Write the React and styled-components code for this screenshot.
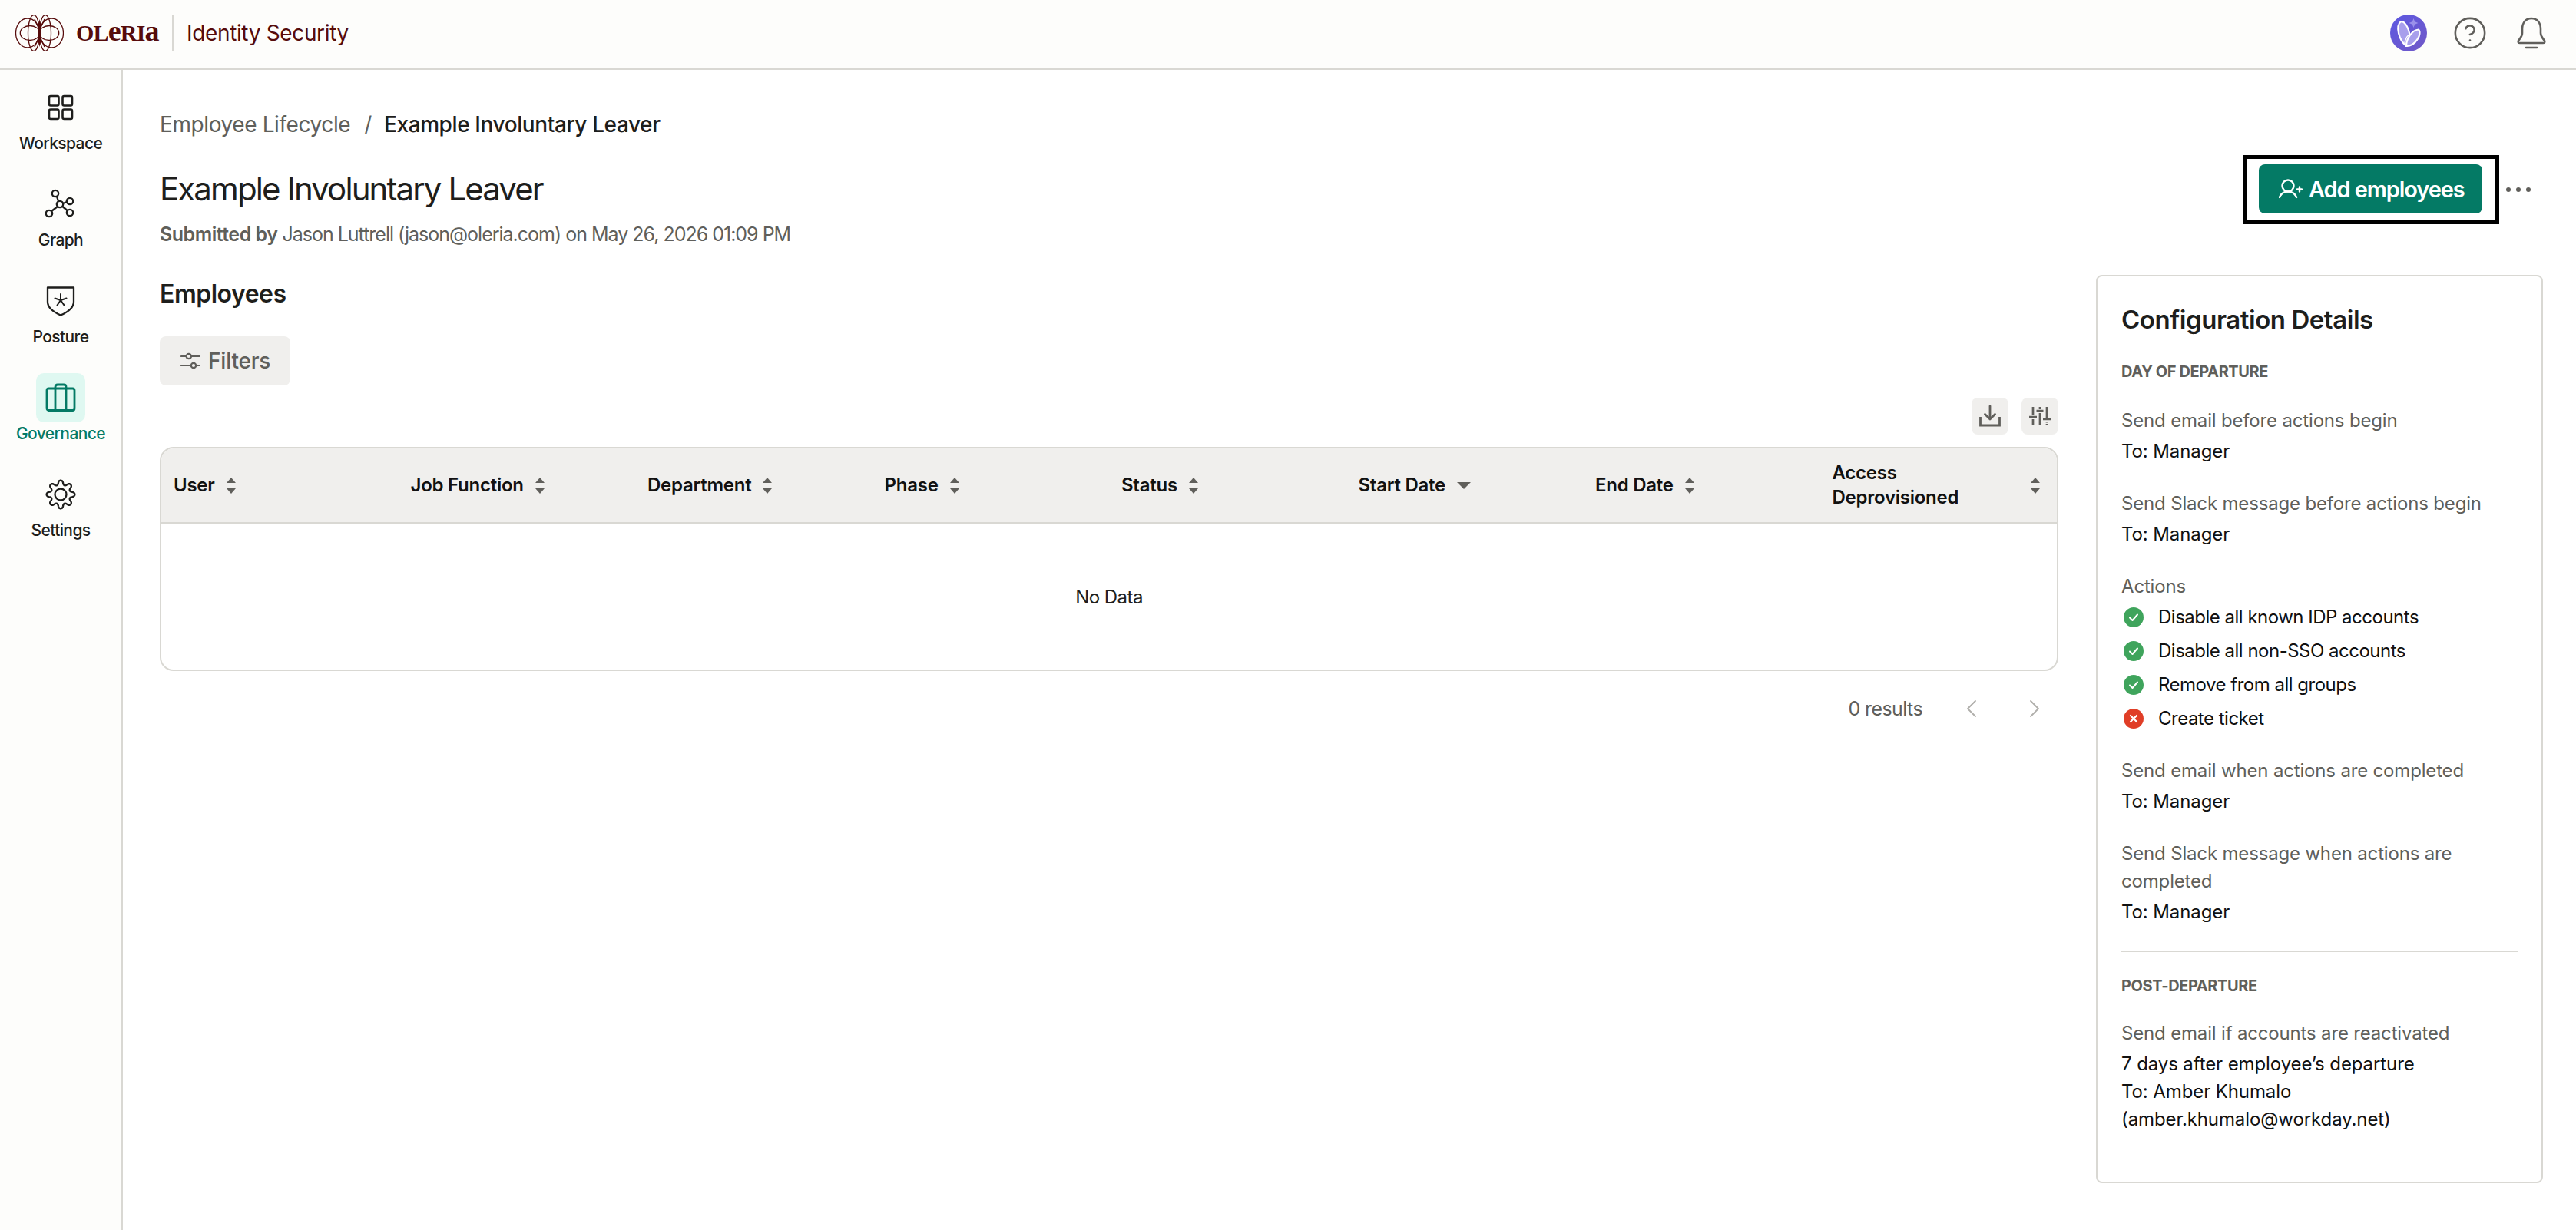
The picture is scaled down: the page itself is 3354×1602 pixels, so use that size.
import React from "react";
import styled, { createGlobalStyle } from "styled-components";
import { CircleHelp, ChevronLeft, ChevronRight } from "lucide-react";

const INK = "#1e1e1c";
const MUTED = "#605f5b";
const LINE = "#d9d8d3";
const SOFT = "#f0efed";
const TEAL = "#047a65";
const MAROON = "#560b0b";

const Global = createGlobalStyle`
  html, body { margin: 0; padding: 0; background: #fff; }
  body { font-family: Inter, "Noto Sans", "Liberation Sans", sans-serif; color: ${INK}; }
  * { box-sizing: border-box; }
`;

const Page = styled.div`
  width: 3354px;
  height: 1602px;
  overflow: hidden;
  display: flex;
  flex-direction: column;
`;

const TopBar = styled.header`
  height: 91px;
  flex: none;
  display: flex;
  align-items: center;
  justify-content: space-between;
  padding: 0 34px 3px 20px;
  background: #fdfdfb;
  border-bottom: 2px solid ${LINE};
`;

const Brand = styled.div`
  display: flex;
  align-items: center;
`;

const Wordmark = styled.span`
  margin-left: 16px;
  width: 105px;
  font-family: "Liberation Serif", serif;
  font-size: 30px;
  font-weight: 700;
  line-height: 48px;
  letter-spacing: -0.8px;
  color: ${MAROON};
  white-space: nowrap;
`;

const WordLower = styled.span`
  font-size: 38px;
  line-height: 1;
`;

const BrandRule = styled.span`
  width: 2px;
  height: 48px;
  margin: 0 17px 0 20px;
  background: ${LINE};
`;

const Product = styled.span`
  font-size: 28px;
  line-height: 48px;
  letter-spacing: -0.35px;
  color: ${MAROON};
`;

const TopIcons = styled.div`
  display: flex;
  align-items: center;
  gap: 32px;
`;

const TopIcon = styled.span`
  display: flex;
  align-items: center;
  justify-content: center;
  width: 48px;
  height: 48px;
  color: ${MUTED};
`;

const Body = styled.div`
  flex: 1;
  display: flex;
  min-height: 0;
`;

const Sidebar = styled.nav`
  width: 160px;
  flex: none;
  padding-top: 17px;
  display: flex;
  flex-direction: column;
  align-items: center;
  gap: 32px;
  background: #fdfdfb;
  border-right: 2px solid ${LINE};
`;

const NavItem = styled.a`
  display: flex;
  flex-direction: column;
  align-items: center;
  width: 130px;
  color: ${(p) => (p.$active ? TEAL : INK)};
`;

const NavIcon = styled.span`
  display: flex;
  align-items: center;
  justify-content: center;
  width: 64px;
  height: 64px;
  border-radius: 10px;
  background: ${(p) => (p.$active ? "#dff8f1" : "transparent")};
`;

const NavLabel = styled.span`
  font-size: 21px;
  line-height: 30px;
  font-weight: 500;
  letter-spacing: -0.6px;
`;

const Main = styled.main`
  flex: 1;
  min-width: 0;
  padding: 53px 43px 0 48px;
  background: #fff;
`;

const Crumbs = styled.div`
  display: flex;
  align-items: center;
  height: 36px;
  font-size: 28px;
  letter-spacing: -0.4px;
  color: ${MUTED};
`;

const CrumbSep = styled.span`
  margin: 0 16px 0 18px;
`;

const CrumbNow = styled.span`
  color: ${INK};
  font-weight: 500;
`;

const PageHead = styled.div`
  margin-top: 22px;
  display: flex;
  justify-content: space-between;
  align-items: flex-start;
`;

const TitleBlock = styled.div`
  padding-top: 16px;
`;

const Title = styled.h1`
  margin: 0;
  font-size: 42px;
  line-height: 56px;
  font-weight: 400;
  letter-spacing: -1.9px;
`;

const Submitted = styled.p`
  margin: 13px 0 0;
  font-size: 25px;
  line-height: 36px;
  letter-spacing: -1px;
  color: ${MUTED};
  b { font-weight: 600; letter-spacing: -0.5px; }
`;

const HeadActions = styled.div`
  display: flex;
  align-items: center;
  margin-right: 7px;
`;

const Marked = styled.div`
  border: 5px solid #000;
  padding: 7px 17px 9px 15px;
`;

const PrimaryButton = styled.button`
  display: flex;
  align-items: center;
  gap: 8px;
  height: 64px;
  width: 291px;
  padding: 0 0 0 26px;
  border: 0;
  border-radius: 8px;
  background: ${TEAL};
  color: #fff;
  font: 600 29px/1 Inter, sans-serif;
  letter-spacing: -1.1px;
`;

const MoreDots = styled.span`
  display: flex;
  align-items: center;
  justify-content: center;
  gap: 7px;
  width: 50px;
  height: 40px;
  span {
    width: 6px;
    height: 6px;
    border-radius: 50%;
    background: ${MUTED};
  }
`;

const Columns = styled.div`
  margin-top: 35px;
  display: flex;
  gap: 49px;
  align-items: flex-start;
`;

const LeftColumn = styled.section`
  width: 2472px;
  flex: none;
`;

const SectionTitle = styled.h2`
  margin: 1px 0 0;
  font-size: 32px;
  line-height: 48px;
  font-weight: 600;
  letter-spacing: -0.5px;
`;

const FilterButton = styled.button`
  margin-top: 31px;
  display: flex;
  align-items: center;
  gap: 10px;
  width: 170px;
  height: 64px;
  padding: 0 0 0 27px;
  border: 0;
  border-radius: 8px;
  background: ${SOFT};
  color: ${MUTED};
  font: 500 28px/1 Inter, sans-serif;
  letter-spacing: -0.2px;
`;

const ToolRow = styled.div`
  margin-top: 16px;
  display: flex;
  justify-content: flex-end;
  gap: 17px;
`;

const ToolButton = styled.span`
  display: flex;
  align-items: center;
  justify-content: center;
  width: 48px;
  height: 48px;
  border-radius: 8px;
  background: ${SOFT};
`;

const TableBox = styled.div`
  margin-top: 16px;
  border: 2px solid ${LINE};
  border-radius: 18px;
  overflow: hidden;
`;

const HeadRow = styled.div`
  display: grid;
  grid-template-columns: repeat(8, 1fr);
  height: 98px;
  background: ${SOFT};
  border-bottom: 2px solid ${LINE};
`;

const HeadCell = styled.div`
  display: flex;
  align-items: center;
  justify-content: ${(p) => (p.$spread ? "space-between" : "flex-start")};
  gap: 15px;
  padding: 0 22px 0 16px;
  font-size: 24px;
  line-height: 32px;
  font-weight: 600;
  letter-spacing: -0.25px;
  color: #111;
`;

const EmptyBody = styled.div`
  height: 190px;
  display: flex;
  align-items: center;
  justify-content: center;
  font-size: 24px;
  letter-spacing: -0.55px;
`;

const Pager = styled.div`
  margin-top: 31px;
  display: flex;
  align-items: center;
  justify-content: flex-end;
  padding-right: 11px;
  height: 36px;
  font-size: 25px;
  letter-spacing: -0.6px;
  color: ${MUTED};
`;

const PagerArrow = styled.span`
  display: flex;
  align-items: center;
  justify-content: center;
  width: 40px;
  margin-left: ${(p) => p.$gap}px;
  color: #b0afab;
`;

const Panel = styled.aside`
  width: 582px;
  height: 1183px;
  flex: none;
  padding: 32px 31px;
  border: 2px solid ${LINE};
  border-radius: 8px;
`;

const PanelTitle = styled.h3`
  margin: 0;
  font-size: 33px;
  line-height: 48px;
  font-weight: 600;
  letter-spacing: -0.45px;
`;

const GroupLabel = styled.div`
  margin-top: ${(p) => p.$top}px;
  font-size: 20px;
  line-height: 28px;
  font-weight: 700;
  letter-spacing: -0.4px;
  color: ${MUTED};
`;

const Block = styled.div`
  margin-top: ${(p) => p.$top || 32}px;
`;

const BlockLabel = styled.div`
  font-size: 24px;
  line-height: 36px;
  letter-spacing: -0.17px;
  color: ${MUTED};
`;

const BlockValue = styled.div`
  margin-top: 4px;
  font-size: 24px;
  line-height: 36px;
  letter-spacing: -0.1px;
  color: #111;
`;

const ActionList = styled.ul`
  list-style: none;
  margin: 4px 0 0;
  padding: 0;
  display: flex;
  flex-direction: column;
  gap: 8px;
`;

const ActionRow = styled.li`
  display: flex;
  align-items: center;
  gap: 19px;
  padding-left: 3px;
  font-size: 24px;
  line-height: 36px;
  letter-spacing: -0.5px;
  color: #111;
`;

const Rule = styled.hr`
  margin: 32px 0 0;
  border: 0;
  height: 2px;
  background: ${LINE};
`;

const LogoMark = () => (
  <svg width="63" height="48" viewBox="0 0 63 48" fill="none" stroke={MAROON} strokeWidth="1.3">
    <ellipse cx="16" cy="24" rx="15.5" ry="19" />
    <ellipse cx="47" cy="24" rx="15.5" ry="19" />
    <ellipse cx="19" cy="24" rx="12.7" ry="9.5" />
    <ellipse cx="44" cy="24" rx="12.7" ry="9.5" />
    <ellipse cx="24" cy="24" rx="7.5" ry="23.4" />
    <ellipse cx="39" cy="24" rx="7.5" ry="23.4" />
    <path d="M31.5 6 C28.5 16 28.5 32 31.5 42 C34.5 32 34.5 16 31.5 6Z" fill={MAROON} stroke="none" />
    <path d="M25 6 L31.5 20 L38 6M25 42 L31.5 28 L38 42" strokeWidth="1.5" />
  </svg>
);

const AvatarMark = () => (
  <svg width="48" height="48" viewBox="0 0 48 48">
    <defs>
      <linearGradient id="av" x1="0" y1="0" x2="1" y2="1">
        <stop offset="0" stopColor="#5c58e2" />
        <stop offset="1" stopColor="#7259c6" />
      </linearGradient>
    </defs>
    <circle cx="24" cy="24" r="24" fill="url(#av)" />
    <path d="M30.5 5 L32.2 9.3 L36.5 11 L32.2 12.7 L30.5 17 L28.8 12.7 L24.5 11 L28.8 9.3Z" fill="#9a91ea" />
    <path d="M21 41 C11 33 7 15 13.5 9.5 C19 6.5 28 22 25 36 C24.5 39 23 41 21 41Z" fill="#a89fec" stroke="#fff" strokeWidth="2.2" />
    <path d="M21 41 C21 31 29 20 37 19.5 C42 24 34 41 21 41Z" fill="#a89fec" stroke="#fff" strokeWidth="2.2" />
    <path d="M19 39 C19 32 22 28 25 26" fill="none" stroke="#fff" strokeWidth="1.5" />
  </svg>
);

const BellIcon = () => (
  <svg width="38" height="42" viewBox="0 0 38 42" fill="none" stroke={MUTED} strokeWidth="2.6" strokeLinecap="round" strokeLinejoin="round">
    <path d="M19 2 C11 2 7 8 7 16 V21 C7 26 4 28 2 31 Q1 34 4 34 H34 Q37 34 36 31 C34 28 31 26 31 21 V16 C31 8 27 2 19 2Z" />
    <path d="M12 40 H26" />
  </svg>
);

const iconProps = { fill: "none", stroke: "currentColor", strokeLinecap: "round", strokeLinejoin: "round" };

const WorkspaceIcon = () => (
  <svg width="34" height="34" viewBox="0 0 34 34" strokeWidth="2.6" {...iconProps}>
    <rect x="2" y="2" width="12.5" height="12.5" rx="2" />
    <rect x="19.5" y="2" width="12.5" height="12.5" rx="2" />
    <rect x="2" y="19.5" width="12.5" height="12.5" rx="2" />
    <rect x="19.5" y="19.5" width="12.5" height="12.5" rx="2" />
  </svg>
);

const GraphIcon = () => (
  <svg width="40" height="40" viewBox="0 0 40 40" strokeWidth="2.3" {...iconProps}>
    <circle cx="19" cy="20" r="4.2" />
    <circle cx="13" cy="6" r="4.2" />
    <circle cx="32" cy="16" r="4.2" />
    <circle cx="32" cy="31" r="4.2" />
    <circle cx="5" cy="32" r="4.2" />
    <path d="M15 10 L17 16 M23 19 L28 17 M22.5 23 L28.5 28 M16 23 L8 29" />
  </svg>
);

const PostureIcon = () => (
  <svg width="38" height="40" viewBox="0 0 38 40" strokeWidth="2.3" {...iconProps}>
    <path d="M2 2.5 H36 V21 C36 30 27 35 19 38.5 C11 35 2 30 2 21Z" />
    <path d="M19 11 V19 M19 19 L11.5 16.5 M19 19 L26.5 16.5 M19 19 L14.5 25.5 M19 19 L23.5 25.5" strokeWidth="2" />
  </svg>
);

const GovernanceIcon = () => (
  <svg width="40" height="38" viewBox="0 0 40 38" strokeWidth="2.8" {...iconProps}>
    <rect x="2" y="7" width="36" height="28.5" rx="2.5" />
    <path d="M13 35 V5 Q13 2 16 2 H24 Q27 2 27 5 V35" />
  </svg>
);

const gearPath = (() => {
  const pts = [];
  for (let i = 0; i < 160; i += 1) {
    const t = (i / 160) * Math.PI * 2;
    const s = Math.cos(8 * t);
    const r = 15.6 + 2.8 * Math.sign(s) * Math.pow(Math.abs(s), 0.6);
    pts.push(`${(20 + r * Math.cos(t)).toFixed(2)} ${(20 + r * Math.sin(t)).toFixed(2)}`);
  }
  return `M${pts.join("L")}Z`;
})();

const SettingsIcon = () => (
  <svg width="40" height="40" viewBox="0 0 40 40" strokeWidth="2.3" {...iconProps}>
    <path d={gearPath} />
    <circle cx="20" cy="20" r="7.5" />
  </svg>
);

const FilterGlyph = () => (
  <svg width="26" height="26" viewBox="0 0 26 26" strokeWidth="2.2" {...iconProps}>
    <path d="M1 7 H7.5 M14 7 H25 M1 19 H14 M20 19 H25" />
    <circle cx="10.8" cy="7" r="3.2" />
    <circle cx="17" cy="19" r="3.2" />
  </svg>
);

const DownloadGlyph = () => (
  <svg width="28" height="28" viewBox="0 0 28 28" stroke={MUTED} strokeWidth="2.8" fill="none">
    <path d="M14 1 V18 M7.5 11.5 L14 18 L20.5 11.5" strokeLinecap="round" strokeLinejoin="round" />
    <path d="M1.5 15 V26 H26.5 V15" />
  </svg>
);

const ColumnsGlyph = () => (
  <svg width="28" height="28" viewBox="0 0 28 28" stroke={MUTED} strokeWidth="2.7" fill="none">
    <path d="M5 2 V13 M0 15 H10 M5 18 V26 M14 2 V5 M9.5 7 H18.5 M14 10 V26 M23 2 V16 M18 18 H28 M23 21 V22.5 M23 24 V26" />
  </svg>
);

const AddUserGlyph = () => (
  <svg width="31" height="26" viewBox="0 0 31 26" fill="none" stroke="#fff" strokeWidth="2.4" strokeLinecap="round">
    <circle cx="12" cy="9" r="7.5" />
    <path d="M1 24 C3 19 7 16.5 12 16.5 C17 16.5 21 19 23 24" />
    <path d="M24 13.5 H30 M27 10.5 V16.5" />
  </svg>
);

const SortStack = styled.span`
  display: flex;
  flex-direction: column;
  gap: 7px;
  flex: none;
`;

const Tri = styled.span`
  display: block;
  width: 0;
  height: 0;
  border-left: 6px solid transparent;
  border-right: 6px solid transparent;
  ${(p) => (p.$up ? `border-bottom: 7px solid ${MUTED};` : `border-top: 7px solid ${MUTED};`)}
`;

const SortDown = styled.span`
  display: block;
  flex: none;
  width: 0;
  height: 0;
  border-left: 9px solid transparent;
  border-right: 9px solid transparent;
  border-top: 9px solid ${MUTED};
`;

const Sort = () => (
  <SortStack>
    <Tri $up />
    <Tri />
  </SortStack>
);

const StatusDot = styled.span`
  flex: none;
  display: flex;
  align-items: center;
  justify-content: center;
  width: 26px;
  height: 26px;
  border-radius: 50%;
  background: ${(p) => (p.$ok ? "#3fa45c" : "#e03e27")};
`;

const Check = () => (
  <svg width="14" height="14" viewBox="0 0 14 14" fill="none" stroke="#fff" strokeWidth="2" strokeLinecap="round" strokeLinejoin="round">
    <path d="M2 7.5 L5.5 11 L12 3.5" />
  </svg>
);

const Cross = () => (
  <svg width="12" height="12" viewBox="0 0 12 12" fill="none" stroke="#fff" strokeWidth="2.2" strokeLinecap="round">
    <path d="M2 2 L10 10 M10 2 L2 10" />
  </svg>
);

const nav = [
  ["Workspace", <WorkspaceIcon />],
  ["Graph", <GraphIcon />],
  ["Posture", <PostureIcon />],
  ["Governance", <GovernanceIcon />, true],
  ["Settings", <SettingsIcon />],
];

const columns = ["User", "Job Function", "Department", "Phase", "Status", "Start Date", "End Date"];

const actions = [
  ["Disable all known IDP accounts", true],
  ["Disable all non-SSO accounts", true],
  ["Remove from all groups", true],
  ["Create ticket", false],
];

export default function App() {
  return (
    <Page>
      <Global />
      <TopBar>
        <Brand>
          <LogoMark />
          <Wordmark>
            OL<WordLower>e</WordLower>RI<WordLower>a</WordLower>
          </Wordmark>
          <BrandRule />
          <Product>Identity Security</Product>
        </Brand>
        <TopIcons>
          <TopIcon><AvatarMark /></TopIcon>
          <TopIcon><CircleHelp size={46} strokeWidth={1.35} /></TopIcon>
          <TopIcon><BellIcon /></TopIcon>
        </TopIcons>
      </TopBar>
      <Body>
        <Sidebar>
          {nav.map(([label, icon, active]) => (
            <NavItem key={label} $active={active}>
              <NavIcon $active={active}>{icon}</NavIcon>
              <NavLabel>{label}</NavLabel>
            </NavItem>
          ))}
        </Sidebar>
        <Main>
          <Crumbs>
            Employee Lifecycle
            <CrumbSep>/</CrumbSep>
            <CrumbNow>Example Involuntary Leaver</CrumbNow>
          </Crumbs>
          <PageHead>
            <TitleBlock>
              <Title>Example Involuntary Leaver</Title>
              <Submitted>
                <b>Submitted by</b> Jason Luttrell (jason@oleria.com) on May 26, 2026 01:09 PM
              </Submitted>
            </TitleBlock>
            <HeadActions>
              <Marked>
                <PrimaryButton>
                  <AddUserGlyph />
                  Add employees
                </PrimaryButton>
              </Marked>
              <MoreDots><span /><span /><span /></MoreDots>
            </HeadActions>
          </PageHead>
          <Columns>
            <LeftColumn>
              <SectionTitle>Employees</SectionTitle>
              <FilterButton>
                <FilterGlyph />
                Filters
              </FilterButton>
              <ToolRow>
                <ToolButton><DownloadGlyph /></ToolButton>
                <ToolButton><ColumnsGlyph /></ToolButton>
              </ToolRow>
              <TableBox>
                <HeadRow>
                  {columns.map((c) => (
                    <HeadCell key={c}>
                      {c}
                      {c === "Start Date" ? <SortDown /> : <Sort />}
                    </HeadCell>
                  ))}
                  <HeadCell $spread>
                    <span>Access<br />Deprovisioned</span>
                    <Sort />
                  </HeadCell>
                </HeadRow>
                <EmptyBody>No Data</EmptyBody>
              </TableBox>
              <Pager>
                0 results
                <PagerArrow $gap={44}><ChevronLeft size={46} strokeWidth={1.1} /></PagerArrow>
                <PagerArrow $gap={42}><ChevronRight size={46} strokeWidth={1.1} /></PagerArrow>
              </Pager>
            </LeftColumn>
            <Panel>
              <PanelTitle>Configuration Details</PanelTitle>
              <GroupLabel $top={30}>DAY OF DEPARTURE</GroupLabel>
              <Block>
                <BlockLabel>Send email before actions begin</BlockLabel>
                <BlockValue>To: Manager</BlockValue>
              </Block>
              <Block>
                <BlockLabel>Send Slack message before actions begin</BlockLabel>
                <BlockValue>To: Manager</BlockValue>
              </Block>
              <Block>
                <BlockLabel>Actions</BlockLabel>
                <ActionList>
                  {actions.map(([text, ok]) => (
                    <ActionRow key={text}>
                      <StatusDot $ok={ok}>{ok ? <Check /> : <Cross />}</StatusDot>
                      {text}
                    </ActionRow>
                  ))}
                </ActionList>
              </Block>
              <Block>
                <BlockLabel>Send email when actions are completed</BlockLabel>
                <BlockValue>To: Manager</BlockValue>
              </Block>
              <Block>
                <BlockLabel>Send Slack message when actions are completed</BlockLabel>
                <BlockValue>To: Manager</BlockValue>
              </Block>
              <Rule />
              <GroupLabel $top={30}>POST-DEPARTURE</GroupLabel>
              <Block $top={30}>
                <BlockLabel>Send email if accounts are reactivated</BlockLabel>
                <BlockValue>
                  7 days after employee’s departure<br />
                  To: Amber Khumalo<br />
                  (amber.khumalo@workday.net)
                </BlockValue>
              </Block>
            </Panel>
          </Columns>
        </Main>
      </Body>
    </Page>
  );
}
